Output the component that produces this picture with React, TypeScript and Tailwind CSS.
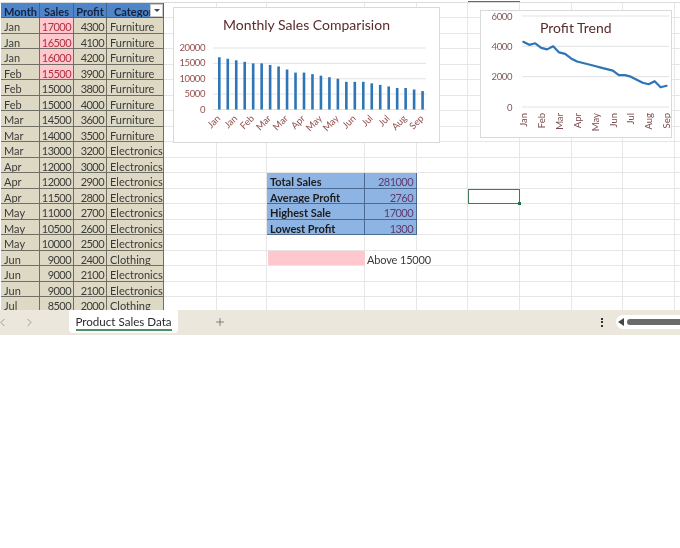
import { ChevronLeft, ChevronRight, Plus } from 'lucide-react';

const data: [string, number, number, string][] = [
  ['Jan', 17000, 4300, 'Furniture'],
  ['Jan', 16500, 4100, 'Furniture'],
  ['Jan', 16000, 4200, 'Furniture'],
  ['Feb', 15500, 3900, 'Furniture'],
  ['Feb', 15000, 3800, 'Furniture'],
  ['Feb', 15000, 4000, 'Furniture'],
  ['Mar', 14500, 3600, 'Furniture'],
  ['Mar', 14000, 3500, 'Furniture'],
  ['Mar', 13000, 3200, 'Electronics'],
  ['Apr', 12000, 3000, 'Electronics'],
  ['Apr', 12000, 2900, 'Electronics'],
  ['Apr', 11500, 2800, 'Electronics'],
  ['May', 11000, 2700, 'Electronics'],
  ['May', 10500, 2600, 'Electronics'],
  ['May', 10000, 2500, 'Electronics'],
  ['Jun', 9000, 2400, 'Clothing'],
  ['Jun', 9000, 2100, 'Electronics'],
  ['Jun', 9000, 2100, 'Electronics'],
  ['Jul', 8500, 2000, 'Clothing'],
];

const sales = [...data.map((d) => d[1]), 8000, 7500, 7000, 7000, 6500, 6000];
const profit = [...data.map((d) => d[2]), 1800, 1600, 1500, 1700, 1300, 1400];

const summary: Record<number, [string, string]> = {
  11: ['Total Sales', '281000'],
  12: ['Average Profit', '2760'],
  13: ['Highest Sale', '17000'],
  14: ['Lowest Profit', '1300'],
};

const grid = 'border-r border-b border-[#e6e6e6]';
const dataCell = 'border-r border-b border-[#6f6f66] bg-[#ddd9c4] px-[3px] overflow-hidden whitespace-nowrap';
const numCell = 'border-r border-b border-[#6f6f66] pl-0 pr-[2px] text-right tracking-[-0.55px] overflow-hidden whitespace-nowrap';
const headCell = 'border-r border-b border-[#44628c] bg-[#4f86c9] font-bold text-[#15233f] overflow-hidden whitespace-nowrap';
const blueCell = 'border-r border-b border-[#4b6a94] bg-[#8eb4e3] px-[3px] overflow-hidden whitespace-nowrap';

function EmptyCells({ count }: { count: number }) {
  return (
    <>
      {Array.from({ length: count }).map((_, i) => (
        <div key={i} className={grid} />
      ))}
    </>
  );
}

function SalesChart() {
  const labels = ['Jan', 'Jan', 'Feb', 'Mar', 'Mar', 'Apr', 'May', 'May', 'Jun', 'Jul', 'Jul', 'Aug', 'Sep'];
  const ticks = [20000, 15000, 10000, 5000, 0];
  const y = (v: number) => 101.5 - (v * 61.5) / 20000;
  return (
    <div className="absolute left-[173px] top-[7px] w-[267px] h-[136px] bg-white border border-[#d9d9d9]">
      <div className="text-center text-[14px] leading-5 mt-[7px] text-[#5a2c2c]">Monthly Sales Comparision</div>
      <svg className="absolute left-0 top-0" width="265" height="134" viewBox="0 0 265 134">
        {ticks.map((t) => (
          <g key={t}>
            <line x1="39" x2="252" y1={y(t)} y2={y(t)} stroke="#e2e2e2" strokeWidth="1" />
            <text x="31" y={y(t) + 3} textAnchor="end" fontSize="9.5" letterSpacing="-0.4" fill="#94504f">{t}</text>
          </g>
        ))}
        {sales.map((s, i) => (
          <rect key={i} x={44 + i * 8.47} y={y(s)} width="2.6" height={(s * 61.5) / 20000} fill="#2e75b6" />
        ))}
        {labels.map((l, i) => (
          <text
            key={i}
            transform={`translate(${47 + i * 16.94} 111) rotate(-45)`}
            textAnchor="end"
            fontSize="9.5"
            fill="#94504f"
          >
            {l}
          </text>
        ))}
      </svg>
    </div>
  );
}

function ProfitChart() {
  const labels = ['Jan', 'Feb', 'Mar', 'Apr', 'May', 'Jun', 'Jul', 'Aug', 'Sep'];
  const ticks = [6000, 4000, 2000, 0];
  const y = (v: number) => 96 - (v * 91) / 6000;
  const pts = profit.map((p, i) => `${42.3 + i * 5.97},${y(p)}`).join(' ');
  return (
    <div className="absolute left-[480px] top-[10px] w-[192px] h-[128px] bg-white border border-[#d9d9d9]">
      <svg className="absolute left-0 top-0" width="190" height="126" viewBox="0 0 190 126">
        {ticks.map((t) => (
          <g key={t}>
            <line x1="41" x2="188" y1={y(t)} y2={y(t)} stroke="#e2e2e2" strokeWidth="1" />
            <text x="31" y={y(t) + 3.5} textAnchor="end" fontSize="9.5" letterSpacing="-0.4" fill="#7d5a5a">{t}</text>
          </g>
        ))}
        <polyline points={pts} fill="none" stroke="#2e75b6" strokeWidth="2.2" strokeLinejoin="round" strokeLinecap="round" />
        {labels.map((l, i) => (
          <text
            key={i}
            transform={`translate(${46 + i * 17.9} 102) rotate(-90)`}
            textAnchor="end"
            fontSize="9.5"
            fill="#7d4a4a"
          >
            {l}
          </text>
        ))}
      </svg>
      <div className="absolute left-[59px] top-[7px] text-[14px] leading-5 text-[#5a2c2c]">Profit Trend</div>
    </div>
  );
}

export default function App() {
  return (
    <div className="min-h-[548px] bg-white font-['Lato',sans-serif] text-[11px] leading-[17px] text-[#3b3b3b] blur-[0.35px]">
      <div className="relative h-[310px] overflow-hidden pt-[3px]">
        <div className="absolute left-0 right-0 top-[2px] h-px bg-[#dcdcdc]" />
        <div className="absolute left-[468px] w-[52px] top-[1px] h-px bg-[#3f7d58]" />

        <div className="grid pl-px grid-cols-[39px_34px_33px_57px_53px_50px_98px_52px_51px_52px_52px_51px_52px_56px] grid-rows-[15px_repeat(19,15.5px)]">
          <div className={`${headCell} px-[3px]`}>Month</div>
          <div className={`${headCell} text-center`}>Sales</div>
          <div className={`${headCell} text-center`}>Profit</div>
          <div className={`${headCell} relative pl-[7px] pr-[13px]`}>
            <div className="overflow-hidden">Category</div>
            <div className="absolute right-0 top-[1px] w-[13px] h-[13px] bg-white border border-[#c8c8c8] flex items-center justify-center">
              <div className="border-x-[3px] border-t-[3px] border-x-transparent border-t-[#444]" />
            </div>
          </div>
          <EmptyCells count={10} />

          {data.map(([month, sale, prof, cat], i) => {
            const row = i + 1;
            const s = summary[row];
            return (
              <div key={i} className="contents">
                <div className={dataCell}>{month}</div>
                <div className={`${numCell} ${sale > 15000 ? 'bg-[#ffc7ce] text-[#b0313f]' : 'bg-[#ddd9c4]'}`}>{sale}</div>
                <div className={`${numCell} bg-[#ddd9c4]`}>{prof}</div>
                <div className={dataCell}>{cat}</div>
                <EmptyCells count={2} />
                {s ? (
                  <>
                    <div className={`${blueCell} font-bold text-[#1c1c1c]`}>{s[0]}</div>
                    <div className={`${blueCell} text-right tracking-[-0.55px] text-[#5d3a6b]`}>{s[1]}</div>
                  </>
                ) : row === 16 ? (
                  <>
                    <div className="ml-px bg-[#ffc7ce] border-b border-[#e6e6e6]" />
                    <div className="px-[2px] whitespace-nowrap tracking-[-0.15px]">Above 15000</div>
                  </>
                ) : (
                  <EmptyCells count={2} />
                )}
                <EmptyCells count={1} />
                {row === 12 ? (
                  <div className="relative border border-[#3f7d58]">
                    <div className="absolute -right-[2px] -bottom-[2px] w-[3px] h-[3px] bg-[#1e7145]" />
                  </div>
                ) : (
                  <EmptyCells count={1} />
                )}
                <EmptyCells count={4} />
              </div>
            );
          })}
        </div>

        <SalesChart />
        <ProfitChart />
      </div>

      <div className="h-[25px] bg-[#ebe7dd] flex items-start overflow-hidden">
        <ChevronLeft className="w-[13px] h-[13px] mt-[6px] -ml-[4px] text-[#8a8a8a]" strokeWidth={1.5} />
        <ChevronRight className="w-[13px] h-[13px] mt-[6px] ml-[14px] text-[#8a8a8a]" strokeWidth={1.5} />
        <div className="ml-[33px] w-[109px] h-[23px] bg-white rounded-b-[4px] flex flex-col items-center">
          <span className="text-[11.6px] leading-[15px] mt-[4px] text-[#2b2b2b]">Product Sales Data</span>
          <div className="w-[96px] h-[2px] bg-[#4f8f6b]" />
        </div>
        <Plus className="w-[12px] h-[12px] mt-[6px] ml-[36px] text-[#444]" strokeWidth={1.25} />
        <div className="ml-auto flex items-center mt-[5px]">
          <div className="flex flex-col gap-[1.5px] mr-[13px]">
            <div className="w-[2px] h-[2px] bg-[#333]" />
            <div className="w-[2px] h-[2px] bg-[#333]" />
            <div className="w-[2px] h-[2px] bg-[#333]" />
          </div>
          <div className="w-[64px] h-[14px] bg-white rounded-l-[7px] flex items-center pl-[2px]">
            <div className="border-y-[4px] border-r-[6px] border-y-transparent border-r-[#444]" />
            <div className="ml-[3px] flex-1 h-[6px] rounded-l-[3px] bg-[#6a6a6a]" />
          </div>
        </div>
      </div>
    </div>
  );
}
